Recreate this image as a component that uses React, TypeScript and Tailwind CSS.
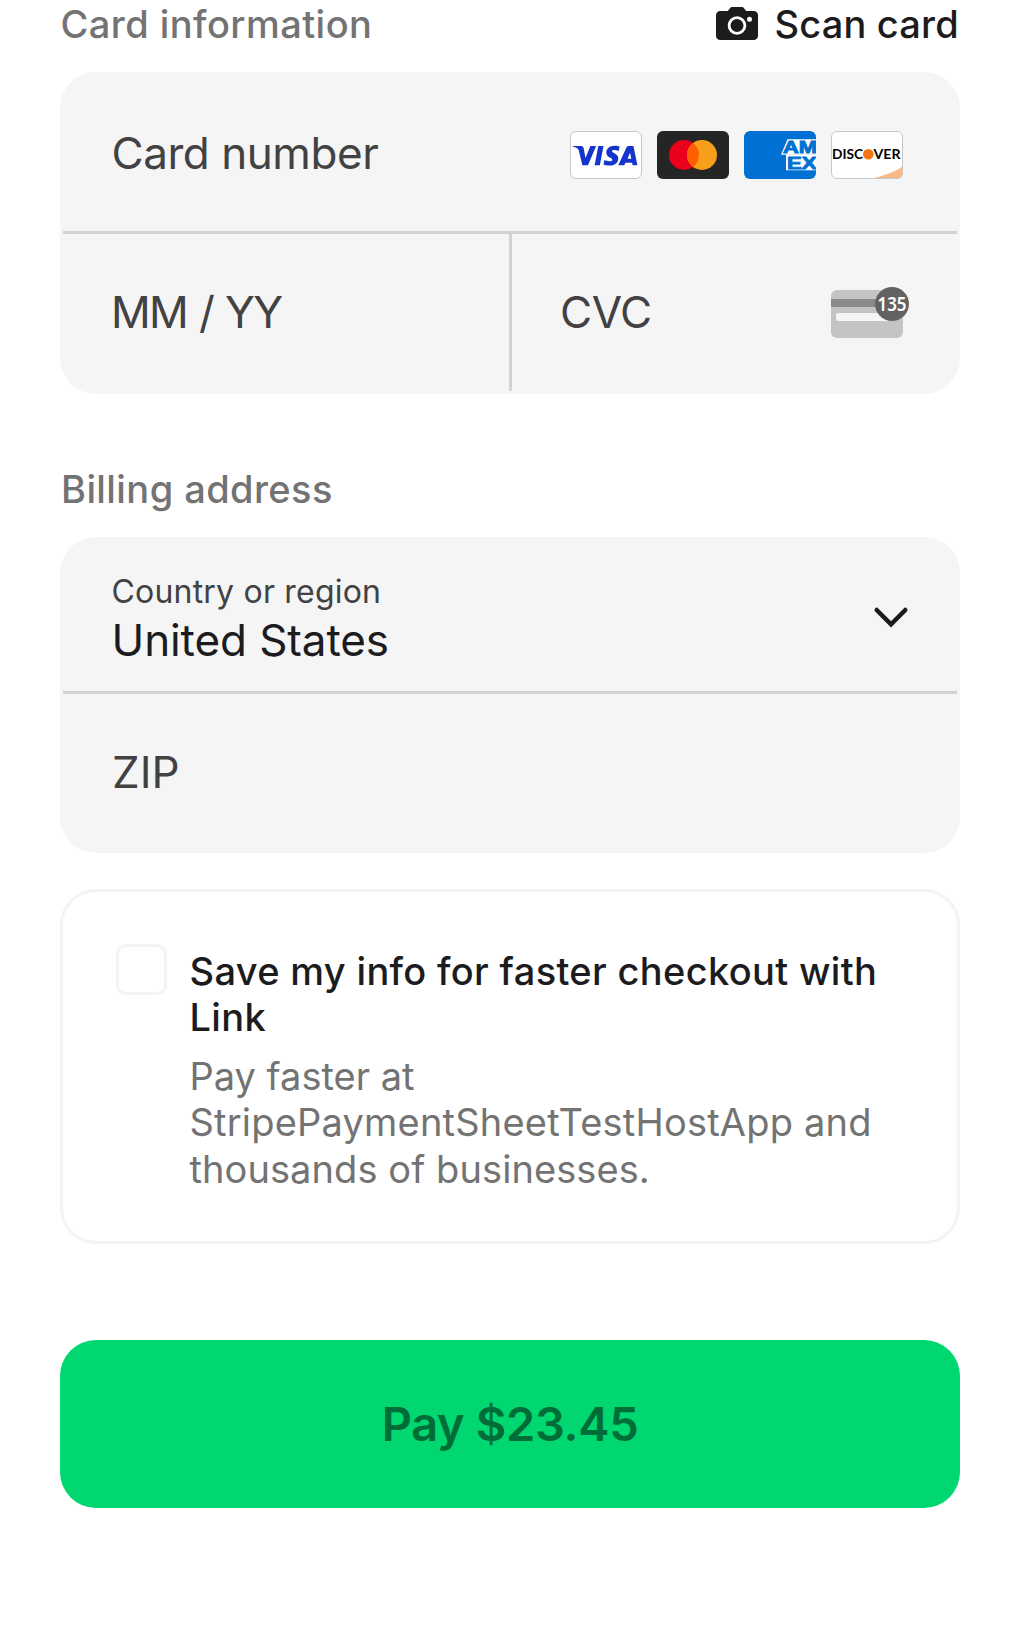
import React from "react";

function CameraIcon() {
  return (
    <svg width="42" height="33" viewBox="0 0 42 33" className="block">
      <path
        d="M4.500 4h7.300l2-2.500C14.600.4 15.300 0 16.700 0h8.600c1.400 0 2.100.4 2.900 1.500l2 2.500h7.300C40.300 4 42 5.700 42 8.500v20c0 2.800-1.700 4.500-4.500 4.500h-33C1.700 33 0 31.300 0 28.500v-20C0 5.700 1.700 4 4.500 4z"
        fill="#1c1c1e"
      />
      <circle cx="21" cy="18.500" r="7.900" fill="none" stroke="#fff" strokeWidth="2.800" />
      <circle cx="33.500" cy="12.200" r="2.500" fill="#fff" />
    </svg>
  );
}

function Visa() {
  return (
    <svg width="72" height="48" viewBox="0 0 72 48" className="block">
      <rect x="0.500" y="0.500" width="71" height="47" rx="5.500" fill="#fff" stroke="#c8c8c8" />
      <g fill="#1434cb">
        <path d="M3 15h8c1.500 0 2.300.7 2.600 2.100l1.900 9.900 4.900-12h5.700L18 34.300h-5.600L8.700 19.300C8.200 17.500 6 16.200 3 15.700z" />
        <path d="M28.300 15h5.200L29.800 34.300h-5.200z" />
        <path d="M49.600 15.600l-.9 4.300c-1.500-.7-3-1-4.400-1-1.500 0-2.300.5-2.300 1.300 0 2 6.300 2.100 6.300 7.200 0 4.300-3.700 7.200-9.100 7.200-2.300 0-4.500-.4-5.700-1l.9-4.500c1.500.7 3.200 1.200 5.100 1.200 1.600 0 2.800-.5 2.800-1.600 0-2.200-6-2.200-6-7.200 0-3.900 3.400-6.800 8.500-6.800 1.900 0 3.600.4 4.800.9z" />
        <path fillRule="evenodd" d="M48.300 34.300l8-17.600c.5-1.100 1.300-1.700 2.500-1.700h4.600L67.400 34.300h-4.800l-.5-2.600h-6.600l-1.300 2.600zM57.500 27.800h3.800l-1.200-6z" />
      </g>
    </svg>
  );
}

function Mastercard() {
  return (
    <svg width="72" height="48" viewBox="0 0 72 48" className="block">
      <rect width="72" height="48" rx="6" fill="#252525" />
      <circle cx="27" cy="24" r="15" fill="#eb001b" />
      <circle cx="45" cy="24" r="15" fill="#f79e1b" />
      <path d="M36 12a15 15 0 0 1 0 24a15 15 0 0 1 0-24z" fill="#ff5f00" />
    </svg>
  );
}

function Amex() {
  return (
    <svg width="72" height="48" viewBox="0 0 72 48" className="block">
      <defs>
        <clipPath id="amex">
          <rect width="72" height="48" rx="6" />
        </clipPath>
      </defs>
      <g clipPath="url(#amex)">
        <rect width="72" height="48" fill="#0071d3" />
        <path d="M43.500 8.200H72v15.600H37z" fill="#fff" />
        <path d="M42 23.500h30v15.700H42z" fill="#fff" />
        <g
          fontFamily="Liberation Sans, sans-serif"
          fontWeight="700"
          fontSize="17"
          fill="#0071d3"
          stroke="#0071d3"
          strokeWidth="0.900"
        >
          <text x="39" y="22.300" textLength="34" lengthAdjust="spacingAndGlyphs">AM</text>
          <text x="43" y="37.800" textLength="29.500" lengthAdjust="spacingAndGlyphs">EX</text>
        </g>
      </g>
    </svg>
  );
}

function Discover() {
  return (
    <svg width="72" height="48" viewBox="0 0 72 48" className="block">
      <defs>
        <clipPath id="discover">
          <rect width="72" height="48" rx="6" />
        </clipPath>
      </defs>
      <rect width="72" height="48" rx="6" fill="#fff" />
      <path d="M38 48C52 45.500 64 41 72 35v13z" fill="#f9b987" clipPath="url(#discover)" />
      <rect x="0.500" y="0.500" width="71" height="47" rx="5.500" fill="none" stroke="#c8c8c8" />
      <g fontFamily="Lato, sans-serif" fontWeight="700" fontSize="14" fill="#000">
        <text x="1" y="28" textLength="31" lengthAdjust="spacingAndGlyphs">DISC</text>
        <text x="42.500" y="28" textLength="27" lengthAdjust="spacingAndGlyphs">VER</text>
      </g>
      <circle cx="37.300" cy="23.200" r="5.300" fill="#f47216" />
    </svg>
  );
}

function CvcIcon() {
  return (
    <svg width="79" height="52" viewBox="0 0 79 52" className="block">
      <rect y="3" width="72" height="48" rx="6" fill="#c4c4c4" />
      <rect y="12" width="72" height="8" fill="#8a8a8a" />
      <rect x="5" y="26" width="60" height="8" rx="2" fill="#f5f5f5" />
      <circle cx="61" cy="17" r="17" fill="#626262" />
      <text
        x="46.500"
        y="24.300"
        fontFamily="Noto Sans, sans-serif"
        fontWeight="600"
        fontSize="20"
        fill="#fff"
        textLength="29"
        lengthAdjust="spacingAndGlyphs"
      >
        135
      </text>
    </svg>
  );
}

export default function App() {
  return (
    <main className="flex h-[1628px] w-[1020px] flex-col bg-white px-[60px] font-['Inter',sans-serif] text-[#1c1c1e]">
      <header className="flex h-[72px] items-start justify-between text-[38px] leading-[48px] font-medium">
        <h2 className="pl-[0.5px] tracking-[0.450px] text-[#737373]">Card information</h2>
        <button className="flex items-start gap-[16px] pr-px">
          <span className="pt-[7px]">
            <CameraIcon />
          </span>
          <span className="tracking-[0.200px]">Scan card</span>
        </button>
      </header>

      <section className="flex h-[322px] flex-col rounded-[36px] bg-[#f5f5f5] text-[44px] leading-[54px] text-[#424242]">
        <div className="mx-[3px] flex h-[162px] items-center justify-between border-b-[3px] border-[#d2d2d2] pr-[54px] pl-[48.5px]">
          <span className="pt-[3px] tracking-[-0.450px]">Card number</span>
          <div className="flex gap-[15px] pt-[6px]">
            <Visa />
            <Mastercard />
            <Amex />
            <Discover />
          </div>
        </div>
        <div className="flex flex-1 px-[3px] pb-[3px]">
          <div className="flex w-[449px] items-center border-r-[3px] border-[#d2d2d2] pb-[2px] pl-[48px]">
            <span className="tracking-[-1.800px] [word-spacing:1.500px]">MM / YY</span>
          </div>
          <div className="flex flex-1 items-center justify-between pr-[47px] pl-[48px]">
            <span className="pb-[2px] tracking-[-0.500px]">CVC</span>
            <CvcIcon />
          </div>
        </div>
      </section>

      <h2 className="mt-[71px] h-[72px] pl-px text-[38px] leading-[48px] font-medium tracking-[0.420px] text-[#737373]">
        Billing address
      </h2>

      <section className="flex h-[316px] flex-col rounded-[36px] bg-[#f5f5f5] text-[44px] text-[#424242]">
        <button className="mx-[3px] flex h-[157px] items-center justify-between border-b-[3px] border-[#d2d2d2] pr-[48px] pl-[48.5px] text-left">
          <span className="flex flex-col pt-[8px]">
            <span className="text-[32px] leading-[44px] tracking-[0.200px]">Country or region</span>
            <span className="leading-[53px] tracking-[-0.100px] text-[#1c1c1e]">United States</span>
          </span>
          <svg width="36" height="24" viewBox="0 0 36 24" className="mt-[8px] block">
            <path d="M3.700 4L18 18.300 32.300 4" fill="none" stroke="#1c1c1e" strokeWidth="4.500" strokeLinecap="round" />
          </svg>
        </button>
        <div className="flex flex-1 items-center pb-[3px] pl-[52px] leading-[54px]">ZIP</div>
      </section>

      <section className="mt-[36px] flex h-[355px] gap-[22.5px] rounded-[36px] border-[3px] border-[#f4f4f4] pt-[52px] pl-[53px]">
        <div className="h-[51px] w-[51px] shrink-0 rounded-[10px] border-[3px] border-[#f4f4f4]" />
        <div className="pt-[4px] text-[38px] leading-[46px]">
          <p className="font-medium tracking-[0.340px]">
            Save my info for faster checkout with
            <br />
            Link
          </p>
          <p className="mt-[12.5px] leading-[46.5px] text-[#737373]">
            Pay faster at
            <br />
            <span className="tracking-[0.200px]">StripePaymentSheetTestHostApp and</span>
            <br />
            <span className="tracking-[0.080px]">thousands of businesses.</span>
          </p>
        </div>
      </section>

      <button className="mt-[96px] h-[168px] rounded-[36px] bg-[#00d770] text-[47px] font-semibold tracking-[-0.350px] text-[#006d38]">
        Pay $23.45
      </button>
    </main>
  );
}
